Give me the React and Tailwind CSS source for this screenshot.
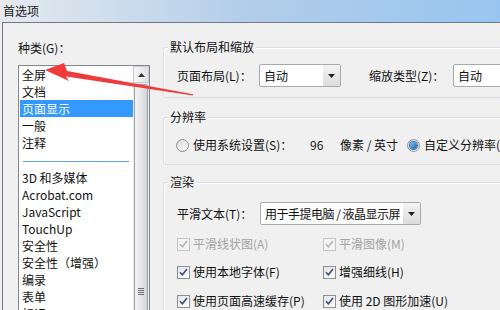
import React from 'react';

const font = { fontFamily: '"Noto Sans CJK SC", "Noto Sans", sans-serif' };

const categories = ['全屏', '文档', '页面显示', '一般', '注释'];
const moreCategories = ['3D 和多媒体', 'Acrobat.com', 'JavaScript', 'TouchUp', '安全性', '安全性（增强）', '编录', '表单', '标识'];

const Group = ({ title, className = '', children }) => (
  <div className={`w-[380px] border border-[#d5dfe5] rounded-[3px] shadow-[inset_1px_1px_0_#fff] ${className}`}>
    <div className="-mt-[9px] ml-[4px] w-fit bg-[#f0f0f0] px-[2px] leading-[16px]">{title}</div>
    {children}
  </div>
);

const Select = ({ value, className = '', textClass = '' }) => (
  <div className={`flex h-[23px] items-stretch rounded-[2px] border border-[#a6a9ae] bg-white ${className}`}>
    <span className={`flex-1 overflow-hidden whitespace-nowrap pl-[4px] leading-[21px] ${textClass}`}>{value}</span>
    <span className="flex w-[17px] shrink-0 items-center justify-center bg-gradient-to-b from-[#f4f4f4] to-[#dcdcdc]">
      <svg width="7" height="4" viewBox="0 0 7 4"><path d="M0 0h7L3.5 4z" fill="#222" /></svg>
    </span>
  </div>
);

const Radio = ({ checked }) => (
  <span className="flex h-[13px] w-[13px] items-center justify-center rounded-full border border-[#8e9197] bg-gradient-to-br from-[#dcdcdc] to-[#fafafa]">
    {checked && <span className="h-[7px] w-[7px] rounded-full bg-gradient-to-br from-[#7fc3f5] to-[#1d5fa5] shadow-[0_0_0_1px_#2a6db5]" />}
  </span>
);

const Check = ({ label, disabled }) => (
  <div className={`flex items-center ${disabled ? 'text-[#a3a3a3]' : ''}`}>
    <span className={`flex h-[13px] w-[13px] items-center justify-center border ${disabled ? 'border-[#c4c4c4] bg-[#f4f4f4]' : 'border-[#8e8f8f] bg-gradient-to-br from-[#e4e4e4] to-white'}`}>
      <svg width="9" height="8" viewBox="0 0 9 8">
        <path d="M1 4.2l2.4 2.6L8 1" fill="none" stroke={disabled ? '#b5b5b5' : '#3d4f82'} strokeWidth="1.6" />
      </svg>
    </span>
    <span className="ml-[3px] leading-[16px]">{label}</span>
  </div>
);

export default function App() {
  return (
    <div className="relative h-[310px] w-[500px] overflow-hidden bg-[#f0f0f0] text-[12px] text-[#111]" style={font}>
      <div className="flex h-[22px] items-center bg-gradient-to-r from-[#e6eaee] via-[#b2cdea] to-[#98c5f0] pl-[3px] text-[#1b1b1b]">
        首选项
      </div>
      <div className="ml-[2px] flex h-[288px] border-l border-t border-[#6f7a86] bg-[#f0f0f0]">
        {/* left column */}
        <div className="w-[147px] shrink-0 pl-[15px]">
          <div className="mt-[17px] leading-[16px]">种类(G)：</div>
          <div className="mt-[9px] flex h-[260px] w-[132px] border border-[#828790] bg-white">
            <div className="w-[114px] pl-[1px]">
              {categories.map((c) => (
                <div
                  key={c}
                  className={`h-[17px] pl-[2px] leading-[17px] ${c === '页面显示' ? 'bg-[#3399ff] text-white' : ''}`}
                >
                  {c}
                </div>
              ))}
              <div className="ml-[3px] mr-[4px] mt-[10px] mb-[7px] h-px bg-[#5da6ee]" />
              {moreCategories.map((c) => (
                <div key={c} className="h-[17px] pl-[2px] leading-[17px]">{c}</div>
              ))}
            </div>
            <div className="flex w-[16px] flex-col bg-[#eaeaec]">
              <div className="flex h-[17px] items-center justify-center border border-[#c9ccd1] bg-gradient-to-r from-[#f6f6f6] to-[#e2e2e4]">
                <svg width="7" height="4" viewBox="0 0 7 4"><path d="M0 4h7L3.5 0z" fill="#333" /></svg>
              </div>
              <div className="mx-[1px] mt-px flex flex-1 flex-col items-center rounded-[2px] border border-[#9ea4ab] bg-gradient-to-r from-[#f2f2f2] via-[#e6e6e8] to-[#d3d4d8]">
                <div className="mt-[203px] flex flex-col gap-[1px]">
                  <span className="h-px w-[6px] bg-[#6a6e74]" />
                  <span className="h-px w-[6px] bg-[#6a6e74]" />
                  <span className="h-px w-[6px] bg-[#6a6e74]" />
                  <span className="h-px w-[6px] bg-[#6a6e74]" />
                </div>
              </div>
            </div>
          </div>
        </div>

        {/* right column */}
        <div className="ml-[13px] flex-1">
          <Group title="默认布局和缩放" className="mt-[24px] pb-[10px]">
            <div className="mt-[9px] flex items-center pl-[13px]">
              <span className="w-[82px]">页面布局(L)：</span>
              <Select value="自动" className="w-[82px]" />
              <span className="ml-[28px] w-[84px]">缩放类型(Z)：</span>
              <div className="h-[23px] w-[80px] rounded-[2px] border border-[#a6a9ae] bg-white pl-[4px] leading-[21px]">自动</div>
            </div>
          </Group>

          <Group title="分辨率" className="mt-[19px] pb-[11px]">
            <div className="mt-[12px] flex h-[16px] items-center pl-[12px]">
              <Radio />
              <span className="ml-[4px] w-[117px]">使用系统设置(S)：</span>
              <span className="w-[30px]">96</span>
              <span className="w-[67px]">像素 / 英寸</span>
              <Radio checked />
              <span className="ml-[4px] whitespace-nowrap">自定义分辨率(R)：</span>
            </div>
          </Group>

          <Group title="渲染" className="mt-[17px] h-[200px]">
            <div className="mt-[12px] flex items-center pl-[13px]">
              <span className="w-[83px]">平滑文本(T)：</span>
              <Select value="用于手提电脑 / 液晶显示屏" className="w-[161px]" textClass="tracking-[-0.5px]" />
            </div>
            <div className="mt-[11px] flex pl-[13px]">
              <div className="w-[146px]"><Check label="平滑线状图(A)" disabled /></div>
              <Check label="平滑图像(M)" disabled />
            </div>
            <div className="mt-[12px] flex pl-[13px]">
              <div className="w-[146px]"><Check label="使用本地字体(F)" /></div>
              <Check label="增强细线(H)" />
            </div>
            <div className="mt-[13px] flex pl-[13px]">
              <div className="w-[146px]"><Check label="使用页面高速缓存(P)" /></div>
              <Check label="使用 2D 图形加速(U)" />
            </div>
          </Group>
        </div>
      </div>

      {/* red annotation arrow */}
      <svg className="pointer-events-none absolute left-0 top-0" width="500" height="310">
        <polygon
          points="45,70 64,63 67,71 193,94.2 193,95.5 66,76.5 69,81"
          fill="#ef3b3b"
        />
      </svg>
    </div>
  );
}
